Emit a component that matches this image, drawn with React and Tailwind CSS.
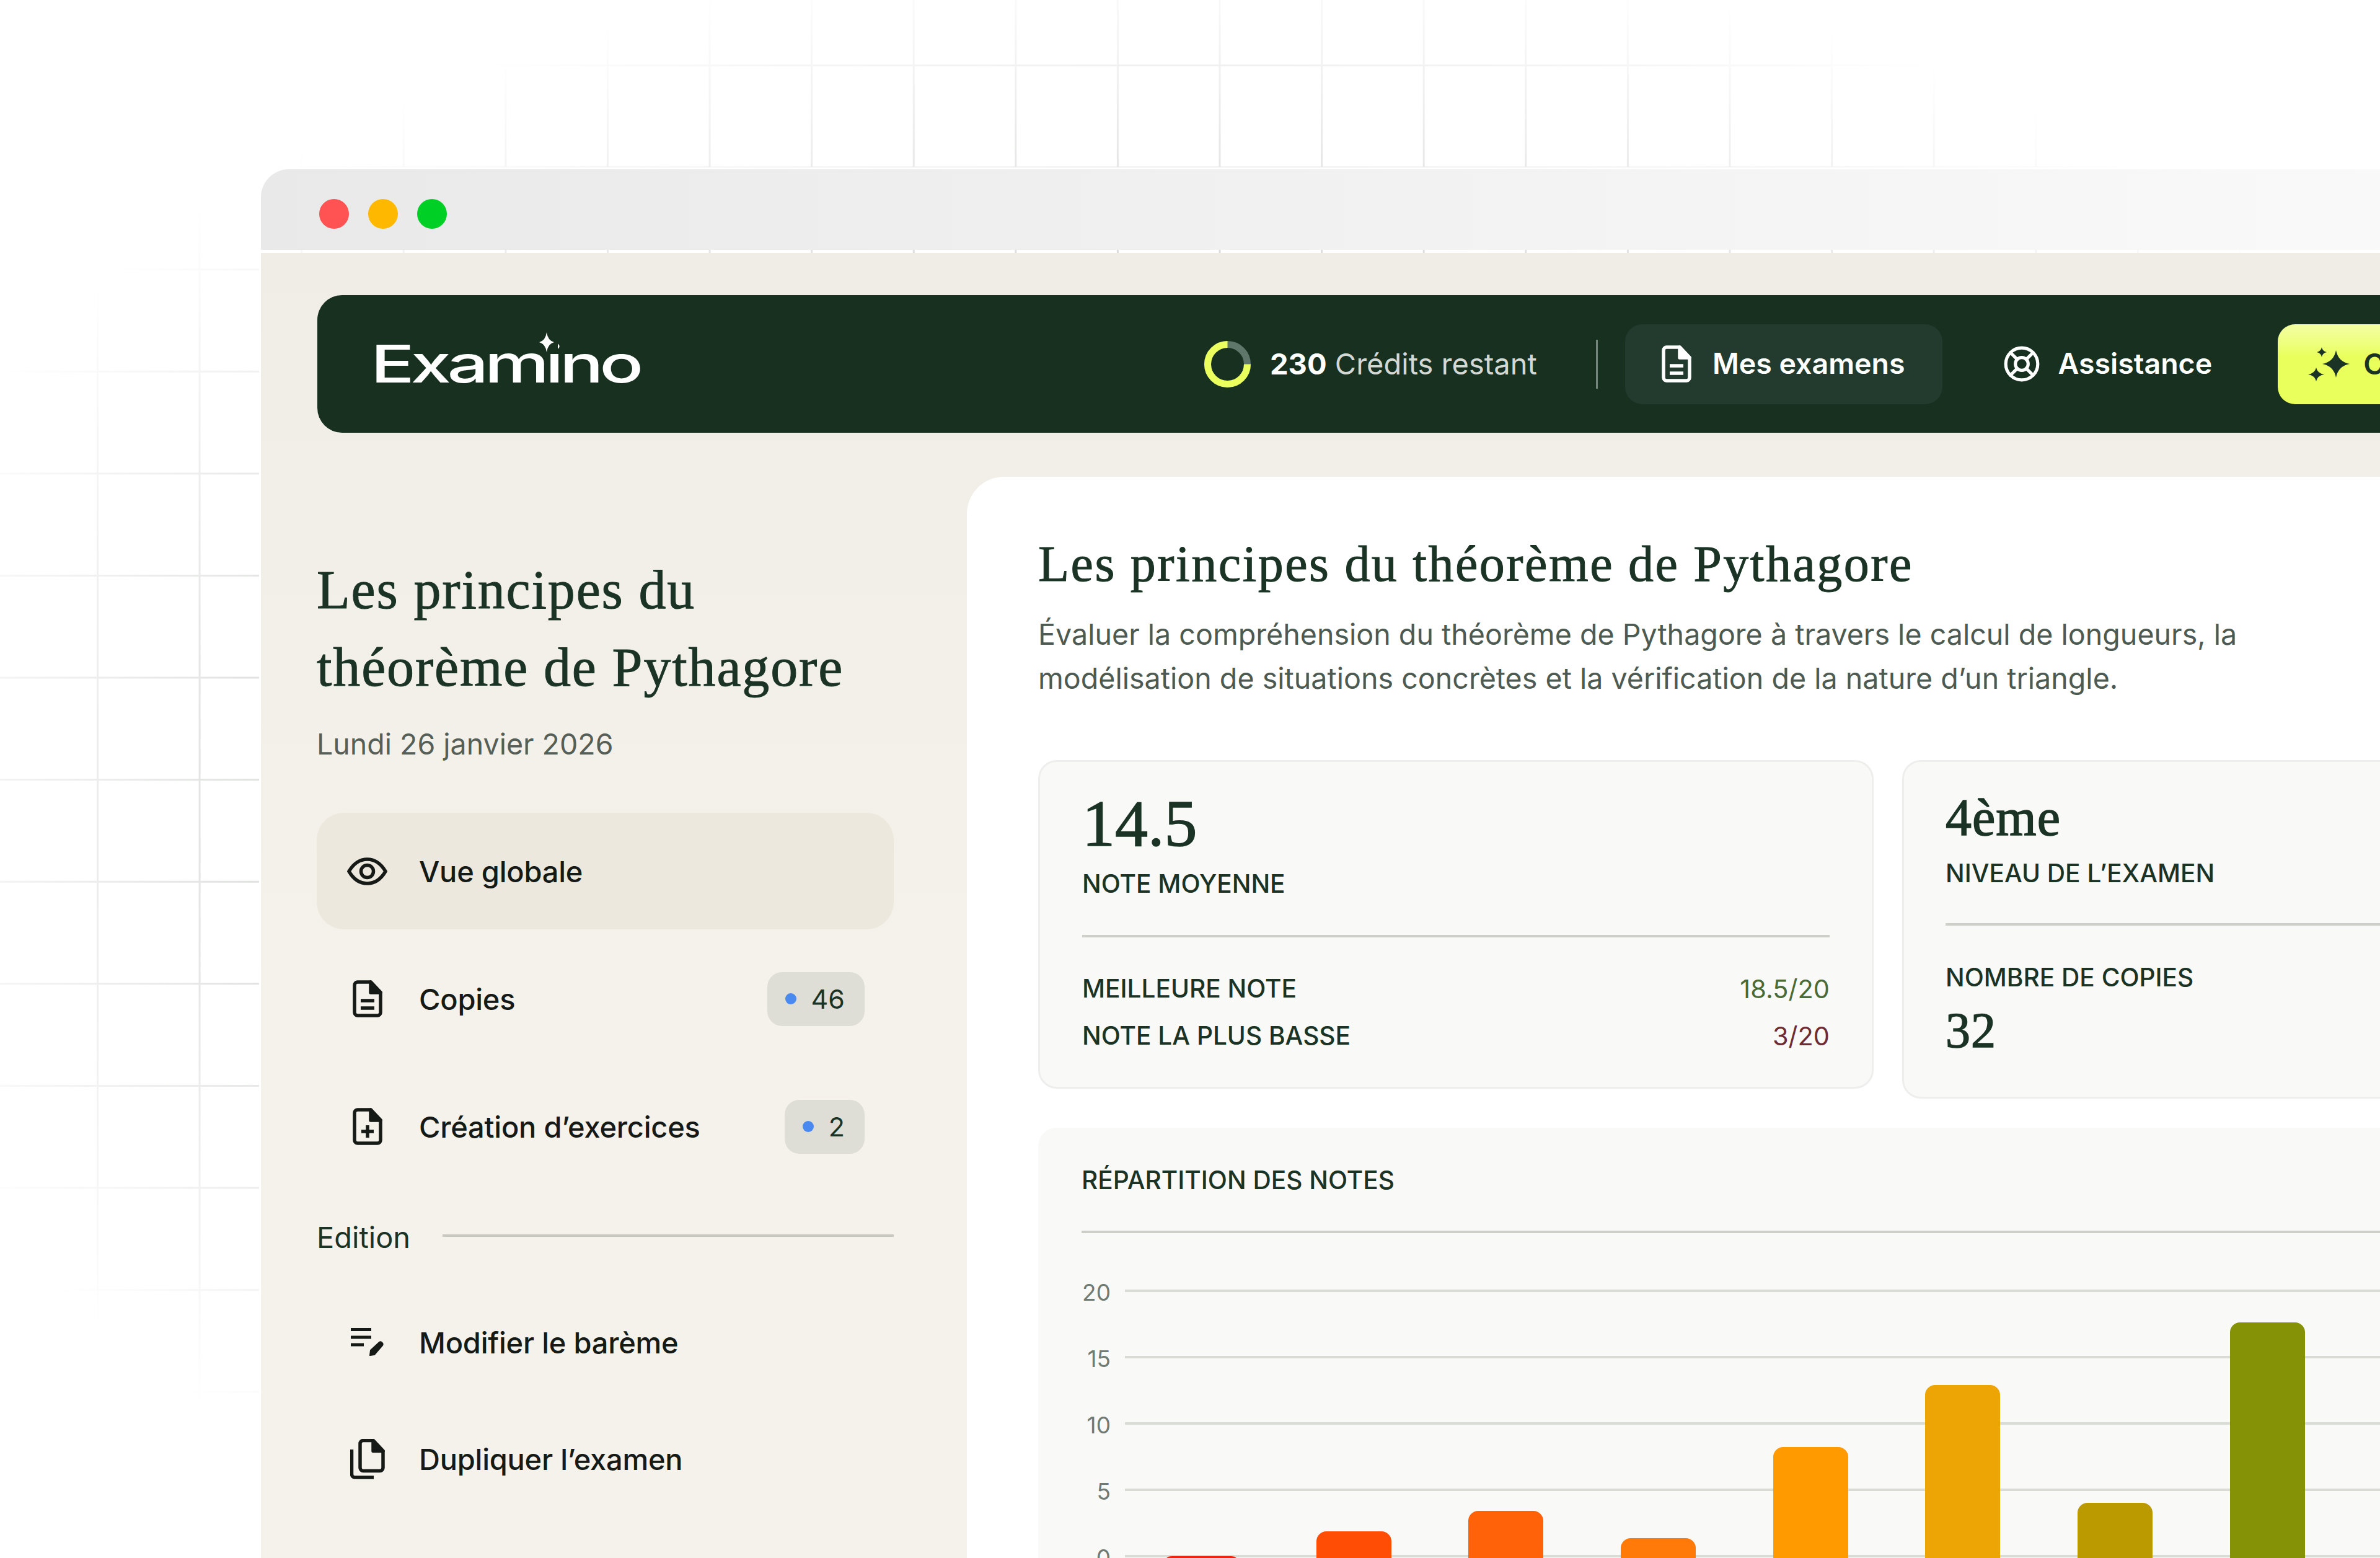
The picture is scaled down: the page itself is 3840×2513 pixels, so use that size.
import React from 'react';
import { LifeBuoy, Trash2 } from 'lucide-react';

const starPath = (cx, cy, rx, ry) => {
  const kx = rx * 0.16;
  const ky = ry * 0.16;
  return `M${cx} ${cy - ry}Q${cx + kx} ${cy - ky} ${cx + rx} ${cy}Q${cx + kx} ${cy + ky} ${cx} ${cy + ry}Q${cx - kx} ${cy + ky} ${cx - rx} ${cy}Q${cx - kx} ${cy - ky} ${cx} ${cy - ry}Z`;
};

function DocIcon({ className, children }) {
  return (
    <svg className={className} viewBox="0 0 48 60" fill="none" stroke="currentColor" strokeWidth="5.5" strokeLinejoin="round">
      <path d="M8 3h21l16 17v32a5 5 0 0 1-5 5H8a5 5 0 0 1-5-5V8a5 5 0 0 1 5-5Z" />
      <path d="M29 3l16 17H29Z" fill="currentColor" />
      {children}
    </svg>
  );
}

function EyeIcon() {
  return (
    <svg className="w-[65px] h-[45px]" viewBox="0 0 65 45" fill="none" stroke="currentColor" strokeWidth="5.5">
      <path d="M3 22.5C11 9 21 3 32.5 3S54 9 62 22.5C54 36 44 42 32.5 42S11 36 3 22.5Z" />
      <circle cx="32.5" cy="22.5" r="10" />
    </svg>
  );
}

function EditIcon() {
  return (
    <svg className="w-[54px] h-[47px]" viewBox="0 0 54 47" fill="none" stroke="currentColor">
      <path d="M0 2.5h33M0 15h33M0 27h21" strokeWidth="5" />
      <path d="M31 44l1-8 14-13c3-2 7 2 5 5L38 43Z" fill="currentColor" strokeWidth="2" strokeLinejoin="round" />
    </svg>
  );
}

function DuplicateIcon() {
  return (
    <svg className="w-[56px] h-[65px]" viewBox="0 0 56 65" fill="none" stroke="currentColor" strokeWidth="5.5" strokeLinejoin="round">
      <path d="M21 2.500h16l16 17v27a5 5 0 0 1-5 5H21a5 5 0 0 1-5-5v-39a5 5 0 0 1 5-5Z" />
      <path d="M37 2.500l16 17H37Z" fill="currentColor" />
      <path d="M2.500 17v40a5 5 0 0 0 5 5H38" />
    </svg>
  );
}

function SparklesIcon() {
  return (
    <svg className="w-[68px] h-[55px] shrink-0" viewBox="0 0 68 55" fill="#1a3325">
      <path d={starPath(46, 27, 22, 22)} />
      <path d={starPath(23, 8, 8, 8)} />
      <path d={starPath(14, 44, 13, 11)} />
    </svg>
  );
}

function CreditRing() {
  return (
    <svg className="w-[75px] h-[75px] shrink-0" viewBox="0 0 75 75" fill="none" strokeWidth="11">
      <circle cx="37.5" cy="37.5" r="32" stroke="#5f776b" />
      <circle cx="37.5" cy="37.5" r="32" stroke="#eaff5e" pathLength="100" strokeDasharray="75 25" />
    </svg>
  );
}

function Logo() {
  return (
    <div className="relative w-[431px] h-[84px] shrink-0 text-white">
      <span className="block origin-left scale-x-[1.4] text-[84px] leading-[84px] font-medium tracking-[-0.055em] whitespace-nowrap">Examino</span>
      <svg className="absolute left-[260px] top-[-9px] w-[48px] h-[48px]" viewBox="0 0 48 48">
        <rect x="6" y="4" width="36" height="30" fill="#17301f" />
        <path d={starPath(24, 16, 12, 16)} fill="white" />
      </svg>
    </div>
  );
}

function Badge({ value }) {
  return (
    <span className="ml-auto flex h-[87px] items-center gap-[24px] rounded-[24px] bg-[#deddd6] pl-[29px] pr-[32px] text-[43px] text-[#1a3325]">
      <span className="h-[18px] w-[18px] rounded-full bg-[#4a8af0]" />
      {value}
    </span>
  );
}

function SideItem({ icon, label, active, badge }) {
  return (
    <div className={`flex h-[188px] items-center pl-[49px] pr-[47px] rounded-[44px] text-[#161a17] ${active ? 'bg-[#ece8dd]' : ''}`}>
      <span className="flex w-[65px] shrink-0 justify-center">{icon}</span>
      <span className="ml-[51px] pt-[3px] text-[47px] font-medium tracking-[-0.005em]">{label}</span>
      {badge && <Badge value={badge} />}
    </div>
  );
}

const bars = [
  { h: 'h-[12px]', c: 'bg-[#f5210f]' },
  { h: 'h-[52px]', c: 'bg-[#ff4d05]' },
  { h: 'h-[85px]', c: 'bg-[#ff6208]' },
  { h: 'h-[41px]', c: 'bg-[#ff7a08]' },
  { h: 'h-[188px]', c: 'bg-[#ff9a00]' },
  { h: 'h-[288px]', c: 'bg-[#eda405]' },
  { h: 'h-[98px]', c: 'bg-[#bb9a00]' },
  { h: 'h-[389px]', c: 'bg-[#869205]' },
];

function Chart() {
  return (
    <div className="relative mt-[68px] flex flex-col gap-[57px]">
      {['20', '15', '10', '5', '0'].map((tick) => (
        <div key={tick} className="flex h-[50px] items-center">
          <span className="mt-[6px] w-[47px] text-right text-[37px] text-[#6f7a72]">{tick}</span>
          <div className="ml-[23px] h-[4px] flex-1 bg-[#d8dcd4]" />
        </div>
      ))}
      {/* bars sit over the grid lines */}
      <div className="absolute bottom-[13px] left-[133px] flex items-end gap-[124.7px]">
        {bars.map((bar, i) => (
          <div key={i} className={`w-[121px] rounded-t-[16px] ${bar.h} ${bar.c}`} />
        ))}
      </div>
    </div>
  );
}

export default function App() {
  return (
    <div className="relative h-[2513px] w-[3840px] overflow-hidden bg-white pl-[418px] pt-[270px] font-['Inter',sans-serif] text-[#1a3325]">
      {/* faded grid behind the window */}
      <div className="absolute inset-0 bg-[linear-gradient(to_right,#d2d5d2_3px,transparent_3px),linear-gradient(to_bottom,#d2d5d2_3px,transparent_3px)] bg-[size:164.6px_164.6px] bg-[position:156px_104px] [mask-image:radial-gradient(ellipse_2250px_1400px_at_1950px_1300px,black_55%,transparent_100%)]" />

      <div className="relative w-[3800px] overflow-hidden rounded-tl-[48px] border-l-[3px] border-t-[3px] border-white">
        {/* title bar */}
        <div className="flex h-[130px] items-center gap-[31px] bg-linear-to-r from-[#e9e9e9] to-[#fbfbfb] pl-[94px] pt-[14px]">
          <span className="h-[48px] w-[48px] rounded-full bg-[#ff5252]" />
          <span className="h-[48px] w-[48px] rounded-full bg-[#ffb800]" />
          <span className="h-[48px] w-[48px] rounded-full bg-[#00d026]" />
        </div>

        <div className="mt-[5px] bg-linear-to-b from-[#f0ede6] to-[#f5f2eb] to-50% pb-[200px]">
          {/* top nav */}
          <div className="ml-[91px] flex h-[222px] translate-y-[68px] items-center rounded-l-[40px] bg-[#17301f] pl-[86px] text-white">
            <Logo />
            <div className="ml-[914px] flex items-center">
              <CreditRing />
              <span className="ml-[31px] whitespace-nowrap text-[47px]">
                <b className="font-bold">230</b> <span className="text-[#d3d8d4]">Crédits restant</span>
              </span>
              <div className="ml-[95px] h-[79px] w-[3px] bg-[#74867b]" />
              <div className="ml-[44px] flex h-[129px] items-center rounded-[28px] bg-[#233a2e] pl-[59px] pr-[60px]">
                <DocIcon className="h-[60px] w-[48px]">
                  <path d="M13 33h22M13 45h22" />
                </DocIcon>
                <span className="ml-[34px] whitespace-nowrap text-[46.5px] font-semibold">Mes examens</span>
              </div>
              <LifeBuoy className="ml-[97px] h-[62px] w-[62px]" strokeWidth={2} />
              <span className="ml-[28px] text-[46.5px] font-semibold">Assistance</span>
              <div className="ml-[106px] flex h-[129px] items-center rounded-[28px] bg-linear-to-b from-[#f3ffa3] to-[#e9ff5c] to-40% pl-[48px] pr-[60px]">
                <SparklesIcon />
                <span className="ml-[22px] whitespace-nowrap text-[47px] font-semibold text-[#1a3325]">Créer un examen</span>
              </div>
            </div>
          </div>

          <div className="mt-[139px] flex">
            {/* sidebar */}
            <aside className="w-[1139px] shrink-0 pl-[90px] pr-[118px] pt-[120px]">
              <h1 className="font-['Liberation_Serif',serif] text-[88px] leading-[125px] tracking-[0.021em] [-webkit-text-stroke:1px_#1a3325]">
                Les principes du
                <br />
                théorème de Pythagore
              </h1>
              <p className="mt-[31px] text-[46.5px] leading-[60px] text-[#555f58]">Lundi 26 janvier 2026</p>

              <div className="mt-[81px] flex flex-col gap-[18px]">
                <SideItem active icon={<EyeIcon />} label="Vue globale" />
                <SideItem
                  icon={
                    <DocIcon className="h-[60px] w-[48px]">
                      <path d="M13 33h22M13 45h22" />
                    </DocIcon>
                  }
                  label="Copies"
                  badge="46"
                />
                <SideItem
                  icon={
                    <DocIcon className="h-[60px] w-[48px]">
                      <path d="M24 28v20M14 38h20" />
                    </DocIcon>
                  }
                  label="Création d’exercices"
                  badge="2"
                />
              </div>

              <div className="flex h-[160px] items-center">
                <span className="pt-[10px] text-[47px]">Edition</span>
                <div className="ml-[52px] mt-[4px] h-[4px] flex-1 bg-[#c8c7c0]" />
              </div>

              <SideItem icon={<EditIcon />} label="Modifier le barème" />
              <SideItem icon={<DuplicateIcon />} label="Dupliquer l’examen" />
              <div className="flex h-[188px] items-center pl-[49px] text-[#e5484d]">
                <span className="flex w-[65px] justify-center">
                  <Trash2 className="h-[58px] w-[52px]" />
                </span>
              </div>
            </aside>

            {/* main panel */}
            <main className="flex-1 rounded-tl-[60px] bg-white pl-[115px] pt-[91px]">
              <h2 className="font-['Liberation_Serif',serif] text-[82px] leading-[100px] tracking-[0.03em] [-webkit-text-stroke:1px_#1a3325]">
                Les principes du théorème de Pythagore
              </h2>
              <p className="mt-[28px] w-[1960px] text-[46.6px] leading-[71px] text-[#4d5a52]">
                Évaluer la compréhension du théorème de Pythagore à travers le calcul de longueurs, la modélisation de situations concrètes et la vérification de la nature d’un triangle.
              </p>

              <div className="mt-[96px] flex items-start gap-[46px]">
                <div className="w-[1348px] shrink-0 rounded-[30px] border-[3px] border-[#eeeeec] bg-[#f9f9f7] pb-[57px] pl-[68px] pr-[68px] pt-[47px]">
                  <div className="font-['Liberation_Serif',serif] text-[106px] leading-[106px] [-webkit-text-stroke:1.5px_#1a3325]">14.5</div>
                  <div className="mt-[19px] text-[40.6px] font-medium leading-[50px]">NOTE MOYENNE</div>
                  <div className="mt-[57px] h-[4px] bg-[#cfcfca]" />
                  <div className="mt-[58px] flex justify-between text-[40.6px] font-medium leading-[50px]">
                    <span>MEILLEURE NOTE</span>
                    <span className="text-[41.5px] font-normal text-[#4a6b35]">18.5/20</span>
                  </div>
                  <div className="mt-[26px] flex justify-between text-[40.6px] font-medium leading-[50px]">
                    <span>NOTE LA PLUS BASSE</span>
                    <span className="text-[41.5px] font-normal text-[#6e2b33]">3/20</span>
                  </div>
                </div>

                <div className="w-[1346px] shrink-0 rounded-[30px] border-[3px] border-[#eeeeec] bg-[#f9f9f7] pb-[67px] pl-[67px] pr-[68px] pt-[50px]">
                  <div className="font-['Liberation_Serif',serif] text-[84px] leading-[80px] tracking-[0.012em] [-webkit-text-stroke:1.5px_#1a3325]">4ème</div>
                  <div className="mt-[25px] text-[40.6px] font-medium leading-[50px]">NIVEAU DE L’EXAMEN</div>
                  <div className="mt-[55px] h-[4px] bg-[#cfcfca]" />
                  <div className="mt-[59px] text-[40.6px] font-medium leading-[50px]">NOMBRE DE COPIES</div>
                  <div className="mt-[20px] font-['Liberation_Serif',serif] text-[80px] leading-[80px] tracking-[0.012em] [-webkit-text-stroke:1.5px_#1a3325]">32</div>
                </div>
              </div>

              <div className="mt-[47px] rounded-t-[30px] bg-[#f9f9f7] px-[70px] pt-[60px] pb-[100px]">
                <div className="text-[40.6px] font-medium leading-[50px]">RÉPARTITION DES NOTES</div>
                <div className="mt-[56px] h-[4px] bg-[#cfcfca]" />
                <Chart />
              </div>
            </main>
          </div>
        </div>
      </div>
    </div>
  );
}
